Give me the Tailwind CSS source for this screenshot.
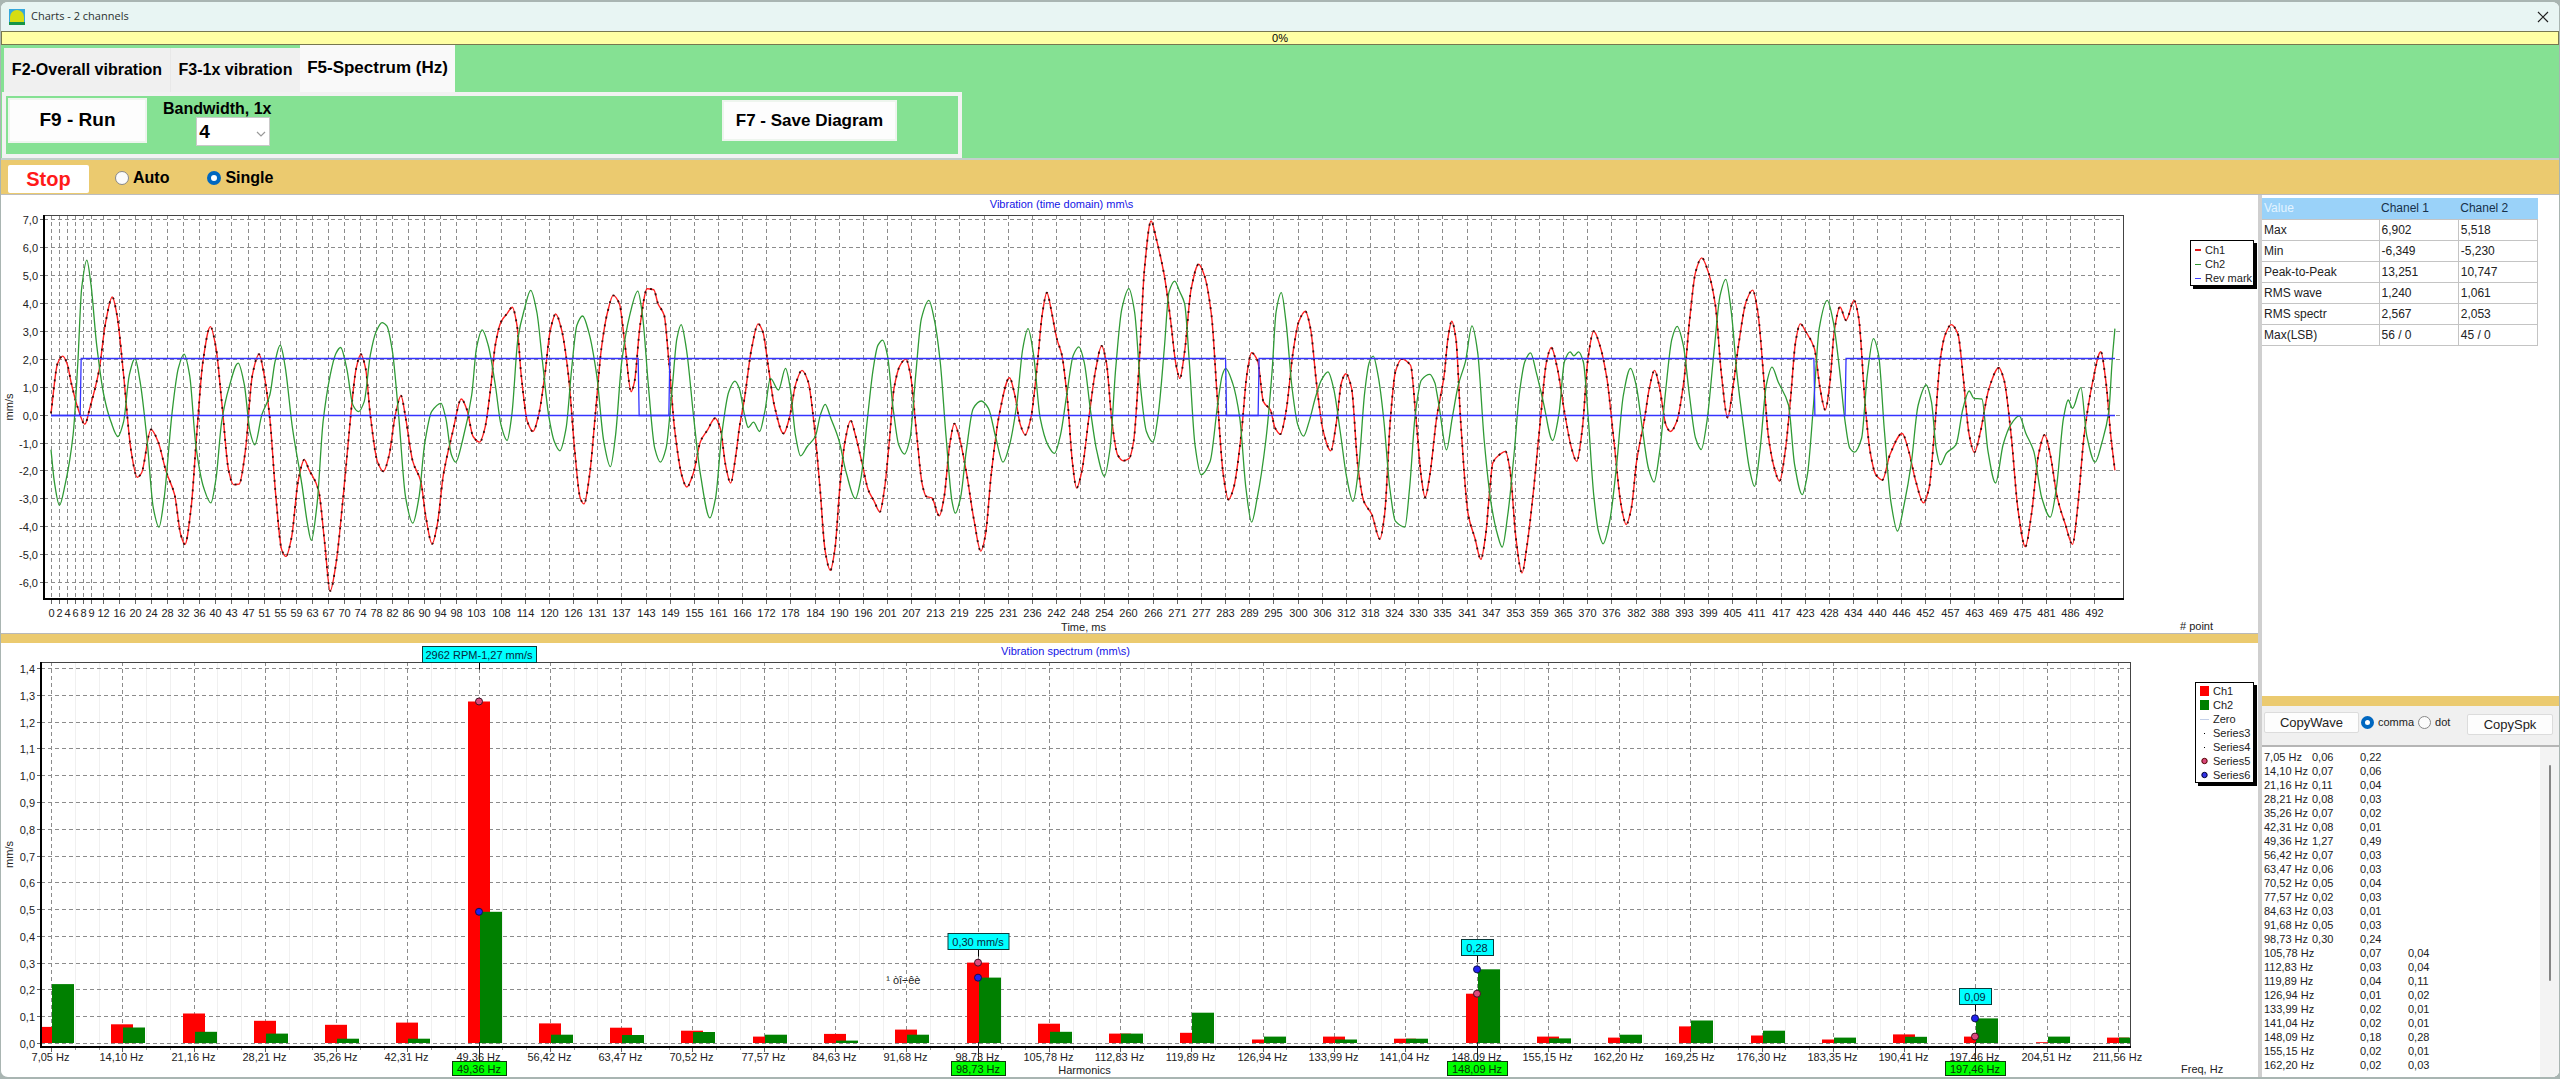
<!DOCTYPE html>
<html lang="en">
<head>
<meta charset="utf-8">
<title>Charts - 2 channels</title>
<script src="https://cdn.jsdelivr.net/npm/@tailwindcss/browser@4"></script>
</head>
<body class="bg-[#a9b5b2] font-['Liberation_Sans',Arial,sans-serif] text-[11px] text-[#222]">
<div class="flex h-screen min-h-[760px] flex-col overflow-hidden rounded-lg border-x border-y-2 border-[#a9b5b2] bg-white">

  <header class="flex h-[29px] shrink-0 items-center gap-1.5 bg-[#e8f5f3] pl-2 pr-2.5">
    <svg class="size-4" viewBox="0 0 16 16" aria-hidden="true">
      <rect width="16" height="16" fill="#35a8dc"/>
      <path d="M1 13V8a7 7 0 0 1 14 0v5z" fill="#d6dd12"/>
      <rect y="13" width="16" height="3" fill="#169447"/>
    </svg>
    <h1 class="grow font-['Open_Sans','Noto_Sans',sans-serif] text-[11px] text-[#2b3130]">Charts - 2 channels</h1>
    <button type="button" aria-label="Close" class="size-3">
      <svg viewBox="0 0 12 12" class="size-3" fill="none" stroke="#222" stroke-width="1.2"><path d="M1 1l10 10M11 1L1 11"/></svg>
    </button>
  </header>

  <div role="progressbar" aria-valuenow="0" aria-valuemin="0" aria-valuemax="100" class="flex h-3.5 shrink-0 items-center justify-center border border-[#77774f] bg-[#ffffa4] text-black">0%</div>

  <section class="flex shrink-0 flex-col items-start bg-[#85e193] pl-px">
    <nav role="tablist" class="flex h-[47px] items-end pl-0.5 text-base font-bold text-black">
      <button role="tab" type="button" class="h-11 w-[167px] border-r border-[#e8e8e8] bg-[#f0f0f0]">F2-Overall vibration</button>
      <button role="tab" type="button" class="h-11 w-[129px] bg-[#f0f0f0]">F3-1x vibration</button>
      <button role="tab" type="button" aria-selected="true" class="h-[47px] w-[155px] bg-[#f9f9f9] pb-0.5 text-[17px]">F5-Spectrum (Hz)</button>
    </nav>
    <div role="tabpanel" class="flex h-[66px] w-[960px] max-w-full items-start border-x-4 border-b-4 border-t-4 border-[#f2f2f2] pl-0.5 font-bold text-black">
      <button type="button" class="mt-0.5 h-[45px] w-[139px] shrink-0 border-2 border-[#eef5ee] bg-[#fdfdfd] text-[19px]">F9 - Run</button>
      <div class="ml-4 flex flex-col items-center">
        <label for="bandwidth" class="mt-1 h-[17px] text-base leading-[17px]">Bandwidth, 1x</label>
        <div class="relative ml-8">
          <select id="bandwidth" class="block h-[29px] w-[74px] appearance-none border border-[#c9c9c9] bg-white pl-0.5 text-[19px] leading-none"><option>4</option><option>8</option></select>
          <svg class="pointer-events-none absolute right-1 top-3 size-2.5" viewBox="0 0 10 10" fill="none" stroke="#999" stroke-width="1.2"><path d="M1 3l4 4 4-4"/></svg>
        </div>
      </div>
      <button type="button" class="ml-auto mr-[61px] mt-1 h-[41px] w-[175px] shrink-0 border-2 border-[#eef5ee] bg-[#fdfdfd] text-[17px]">F7 - Save Diagram</button>
    </div>
  </section>

  <section class="flex h-[37px] shrink-0 items-center border-b border-t-2 border-b-[#bdbdbd] border-t-[#c3cfcb] bg-[#ebca6f] pl-[7px] text-base font-bold text-black">
    <button type="button" class="mt-1 h-7 w-[81px] rounded-xs bg-white text-xl font-bold text-[#ff1a1a]">Stop</button>
    <label class="ml-[26px] flex items-center gap-1 pt-0.5"><input type="radio" name="mode" class="size-3.5 appearance-none rounded-full border border-[#888] bg-[#fbfbfb] checked:border-4 checked:border-[#0067c0]">Auto</label>
    <label class="ml-[38px] flex items-center gap-1 pt-0.5"><input type="radio" name="mode" checked class="size-3.5 appearance-none rounded-full border border-[#888] bg-white checked:border-4 checked:border-[#0067c0]">Single</label>
  </section>

  <main class="flex min-h-0 grow">
    <div class="flex min-w-0 grow flex-col">
      <section class="relative min-h-0 flex-[438] basis-0">
        <svg id="wave" class="absolute inset-0 size-full" role="img" aria-label="Vibration, time domain"></svg>
        <ul class="absolute right-1 top-[45px] w-16 border border-black bg-white pl-1 pt-0.5 leading-[14px] shadow-[3px_3px_0_#000]">
          <li class="flex items-center gap-1"><span class="h-0.5 w-1.5 bg-[#e01818]"></span>Ch1</li>
          <li class="flex items-center gap-1"><span class="h-px w-1.5 bg-[#2e962e]"></span>Ch2</li>
          <li class="flex items-center gap-1 whitespace-nowrap"><span class="h-px w-1.5 shrink-0 bg-[#3c3cff]"></span>Rev mark</li>
        </ul>
      </section>
      <div class="h-[10px] shrink-0 border-t border-[#b9b9b9] bg-[#ebca6f]"></div>
      <section class="relative min-h-0 flex-[434] basis-0">
        <svg id="spectrum" class="absolute inset-0 size-full" role="img" aria-label="Vibration spectrum"></svg>
        <ul class="absolute right-1 top-[39px] w-[59px] border border-black bg-white pl-1 pt-px leading-[14px] shadow-[3px_3px_0_#000]">
          <li class="flex items-center gap-1"><span class="h-2.5 w-[9px] bg-[#ff0000]"></span>Ch1</li>
          <li class="flex items-center gap-1"><span class="h-2.5 w-[9px] bg-[#008000]"></span>Ch2</li>
          <li class="flex items-center gap-1"><span class="h-px w-[9px] bg-[#c3cfe8]"></span>Zero</li>
          <li class="flex items-center gap-1"><span class="mx-1 size-px bg-black"></span>Series3</li>
          <li class="flex items-center gap-1"><span class="mx-1 size-px bg-black"></span>Series4</li>
          <li class="flex items-center gap-1"><svg class="h-2 w-[9px]" viewBox="0 0 9 8"><circle cx="4.5" cy="4" r="2.7" fill="#d9477a" stroke="#500"/></svg>Series5</li>
          <li class="flex items-center gap-1"><svg class="h-2 w-[9px]" viewBox="0 0 9 8"><circle cx="4.5" cy="4" r="2.7" fill="#3333e6" stroke="#003"/></svg>Series6</li>
        </ul>
      </section>
    </div>

    <aside class="flex w-[301px] shrink-0 flex-col border-l-4 border-[#cfcfcf] bg-white">
      <div class="min-h-0 grow pt-[3px]">
        <table class="w-[276px] table-fixed border-collapse text-xs leading-5">
          <thead><tr class="h-[21px] bg-[#9ad2f9] text-left text-[#173049]"><th class="w-[117px] border-b border-[#c4c4c4] pl-0.5 font-normal text-[#e4f4ff]">Value</th><th class="border-b border-[#c4c4c4] pl-0.5 font-normal">Chanel 1</th><th class="border-b border-[#c4c4c4] pl-0.5 font-normal">Chanel 2</th></tr></thead>
          <tbody id="stats"></tbody>
        </table>
      </div>
      <div class="h-[10px] shrink-0 bg-[#ebca6f]"></div>
      <div class="flex h-[41px] shrink-0 items-start border-b-2 border-[#b5b5b5] bg-[#f0f0f0] pl-0.5 pt-1.5">
        <button type="button" class="h-[21px] w-[95px] rounded-xs border border-[#dcdcdc] bg-[#fdfdfd] text-[13px]">CopyWave</button>
        <label class="ml-0.5 flex h-[21px] items-center gap-1"><input type="radio" name="sep" checked class="size-[13px] appearance-none rounded-full border border-[#888] bg-white checked:border-4 checked:border-[#0067c0]">comma</label>
        <label class="ml-1 flex h-[21px] items-center gap-1"><input type="radio" name="sep" class="size-[13px] appearance-none rounded-full border border-[#888] bg-[#fbfbfb] checked:border-4 checked:border-[#0067c0]">dot</label>
        <button type="button" class="ml-auto mr-1.5 mt-0.5 h-[21px] w-[86px] rounded-xs border border-[#dcdcdc] bg-[#fdfdfd] text-[13px]">CopySpk</button>
      </div>
      <div class="flex h-[330px] shrink-0 bg-[#f3f3f3]">
        <textarea id="values" readonly aria-label="Spectrum values" class="grow resize-none overflow-hidden whitespace-pre bg-white pl-0.5 pt-[3px] text-[11px] leading-[14px] outline-none [tab-size:48px]"></textarea>
        <div class="flex w-[19px] justify-center pt-[18px]"><div class="h-[216px] w-0.5 rounded-full bg-[#858585]"></div></div>
      </div>
    </aside>
  </main>
</div>

<script>
const stats = [['Max','6,902','5,518'],['Min','-6,349','-5,230'],['Peak-to-Peak','13,251','10,747'],['RMS wave','1,240','1,061'],['RMS spectr','2,567','2,053'],['Max(LSB)','56 / 0','45 / 0']];
document.getElementById('stats').innerHTML = stats.map(r =>
  `<tr class="h-[21px]">${r.map(c => `<td class="border-b border-r border-[#c4c4c4] pl-0.5">${c}</td>`).join('')}</tr>`).join('');

const listing = ['7,05 Hz|0,06|0,22','14,10 Hz|0,07|0,06','21,16 Hz|0,11|0,04','28,21 Hz|0,08|0,03','35,26 Hz|0,07|0,02','42,31 Hz|0,08|0,01','49,36 Hz|1,27|0,49','56,42 Hz|0,07|0,03','63,47 Hz|0,06|0,03','70,52 Hz|0,05|0,04','77,57 Hz|0,02|0,03','84,63 Hz|0,03|0,01','91,68 Hz|0,05|0,03','98,73 Hz|0,30|0,24','105,78 Hz|0,07|0,04','112,83 Hz|0,03|0,04','119,89 Hz|0,04|0,11','126,94 Hz|0,01|0,02','133,99 Hz|0,02|0,01','141,04 Hz|0,02|0,01','148,09 Hz|0,18|0,28','155,15 Hz|0,02|0,01','162,20 Hz|0,02|0,03'];
document.getElementById('values').value = listing.join('\n').replaceAll('|', '\t');

/* ---- tiny SVG helpers ---- */
const line = (x1,y1,x2,y2,cls) => `<path d="M${x1} ${y1}L${x2} ${y2}" fill="none" class="${cls}"/>`;
const text = (x,y,s,anchor='middle',cls='fill-[#222]') => `<text x="${x}" y="${y}" text-anchor="${anchor}" class="${cls}">${s}</text>`;
const GRID = 'stroke-[#8c8c8c] [stroke-dasharray:4_3]';
const fmt = (v,d) => v.toFixed(d).replace('.', ',');
const half = v => Math.round(v) + .5;

const frames1 = [
[108,675,122,525,133,503,142,525,152,590,163,650,180,708,190,662,210,545,224,400,238,325,248,380,262,560,278,790,291,868,300,855,320,724,335,760,352,850,370,920,383,1040,392,1070,405,960,418,720,430,520,446,414,458,480,470,640,485,850,495,890,507,888,520,790,535,560,549,497,560,560,572,690,585,930,597,1085,606,1106,618,1050,632,880,645,815,655,845,675,905,688,1060,700,1210,712,1130,728,920,745,660,755,540,765,497,775,540,785,680,800,820,813,850,825,800,838,680,850,622,860,690,875,820,892,880,903,990,916,1068,927,1010,940,860,960,730,978,632,990,665,1003,745,1017,762,1028,720,1040,600,1050,470,1062,400,1075,375,1086,356,1096,410,1105,560,1118,700,1130,730,1142,680,1155,560,1166,430,1178,376,1190,420,1205,560,1218,780,1230,930,1238,948,1250,860,1262,680,1275,480,1288,370,1300,320,1313,345,1325,470,1338,610,1345,580,1357,410,1372,300,1386,303,1395,345,1408,380,1418,520,1430,720,1445,860,1456,897,1470,855,1485,760,1500,725,1516,690,1527,720,1538,830,1549,885,1560,800],
[84,720,95,630,110,480,124,406,134,430,145,530,158,650,178,736,190,690,204,585,217,546,230,580,242,700,255,900,266,1090,277,1148,287,1080,297,900,308,760,320,697,330,740,345,830,357,905,370,940,382,972,392,900,402,760,412,600,425,530,437,512,447,560,460,740,472,890,480,925,492,930,508,984,518,930,530,770,540,706,550,745,565,850,582,1000,596,1090,606,1040,618,860,635,680,657,568,668,620,680,710,690,740,702,690,715,540,726,380,736,312,746,370,757,450,768,500,780,640,790,820,799,900,810,850,825,690,840,540,852,472,862,520,874,700,886,800,898,818,910,812,920,760,932,520,943,240,957,96,968,150,985,260,998,390,1010,530,1018,570,1028,490,1042,300,1058,226,1070,260,1085,380,1097,620,1110,860,1121,935,1132,900,1148,740,1160,560,1170,493,1183,518,1195,640,1210,665,1220,720,1231,738,1243,670,1258,490,1270,400,1284,368,1295,420,1308,590,1322,730,1338,788,1350,700,1361,580,1370,556,1382,600,1395,830,1408,940,1425,980,1442,1054,1452,980,1464,700,1475,550,1488,512,1507,530,1518,680,1530,870,1538,928,1548,860],
[79,690,95,560,103,450,111,398,120,450,130,700,146,980,160,1050,173,1115,183,1040,192,900,198,825,212,800,225,790,235,850,247,1050,260,1156,270,1080,285,900,300,680,312,520,322,477,335,540,350,670,365,780,376,820,388,720,400,510,412,428,425,470,440,570,455,760,470,950,481,1010,492,960,503,820,520,690,530,600,541,546,552,600,565,710,575,730,588,700,603,580,615,400,628,250,641,207,655,250,670,350,683,560,696,688,707,600,720,460,735,340,749,304,760,370,772,560,782,740,795,840,806,880,818,790,830,620,840,460,850,406,862,430,880,480,892,600,903,665,913,580,922,430,934,355,947,395,964,335,974,390,987,640,998,790,1010,860,1024,876,1040,800,1066,736,1080,790,1095,880,1111,945,1123,900,1135,720,1147,510,1158,435,1170,408,1184,435,1195,560,1208,740,1219,793,1232,730,1250,600,1271,538,1282,575,1297,740,1312,970,1327,1077,1340,980,1355,800,1368,740,1380,800,1395,930,1412,1010,1427,1070,1438,960,1452,740,1470,580,1487,490,1498,580,1508,740,1517,847]];
const frames2 = [
[108,785,115,880,126,952,138,890,155,740,165,520,173,300,184,214,193,290,205,470,220,620,235,700,250,745,262,700,274,560,286,510,297,580,312,760,325,960,337,1018,348,930,365,670,378,540,390,497,402,560,415,770,432,900,447,945,458,870,470,700,485,600,505,524,518,590,530,730,540,770,555,680,572,620,583,520,594,470,604,530,620,720,640,890,652,1010,660,1058,672,950,685,700,700,560,712,495,722,477,735,540,748,650,760,670,772,640,785,500,797,430,810,402,820,412,832,490,845,680,860,930,875,1006,888,930,900,770,915,670,935,645,945,690,957,800,966,822,980,760,1000,620,1010,480,1022,424,1035,470,1050,590,1062,710,1075,757,1085,680,1098,450,1112,360,1125,305,1138,370,1150,520,1163,680,1175,760,1187,788,1200,720,1212,540,1223,410,1235,382,1248,430,1265,560,1280,760,1294,836,1305,740,1318,520,1335,380,1352,307,1362,380,1375,600,1388,780,1400,822,1412,780,1425,600,1435,450,1444,408,1455,480,1470,680,1485,860,1505,990,1517,930,1530,740,1545,610,1558,578],
[84,600,95,680,103,718,114,702,127,730,138,670,150,570,167,605,182,540,192,600,203,740,214,803,228,775,245,745,256,680,266,648,278,690,295,755,310,850,330,932,342,870,355,700,368,540,378,470,388,455,398,500,410,660,422,770,434,798,446,750,458,560,470,390,486,335,497,390,510,520,522,740,535,940,542,976,553,930,565,790,580,660,597,638,612,660,628,750,643,822,657,770,672,650,685,480,696,420,708,500,722,690,738,770,752,796,765,740,778,620,792,500,804,475,815,520,828,660,842,790,858,865,870,780,882,540,895,360,910,300,922,370,935,600,947,730,961,762,972,680,985,480,995,310,1007,277,1018,310,1028,345,1038,520,1050,770,1063,860,1082,820,1098,650,1108,560,1115,540,1130,585,1145,690,1158,900,1170,1003,1182,930,1200,760,1213,560,1222,370,1233,312,1243,400,1256,600,1268,710,1280,744,1292,700,1305,630,1318,575,1332,550,1344,600,1358,730,1372,870,1385,940,1397,840,1410,610,1420,520,1428,503,1438,560,1450,690,1463,900,1475,1000,1495,1018,1505,900,1517,680,1530,575,1548,558,1559,585],
[79,610,85,660,100,785,112,690,125,590,140,520,154,412,166,490,180,760,195,950,208,1040,218,1078,230,980,243,800,255,610,266,520,278,493,290,550,305,640,325,757,338,680,350,520,362,490,370,502,380,490,390,520,400,680,412,920,422,1030,432,1068,446,1000,460,840,475,620,490,540,502,590,515,720,528,840,540,882,552,790,565,600,578,450,589,413,602,470,615,620,628,750,640,784,652,700,667,490,680,320,692,272,703,360,716,560,730,720,742,840,753,895,765,780,778,590,790,536,803,580,825,650,838,830,854,920,865,860,878,650,890,420,907,335,920,400,933,540,945,700,955,780,965,792,980,750,992,560,1005,450,1016,500,1028,720,1042,940,1056,1030,1070,950,1085,830,1100,650,1117,590,1128,640,1138,780,1147,830,1160,795,1180,770,1195,660,1208,608,1218,630,1235,632,1248,790,1264,885,1280,770,1296,710,1314,683,1328,735,1345,790,1362,930,1380,988,1393,900,1408,690,1418,635,1427,660,1445,598,1457,740,1475,822,1490,760,1504,670,1511,520,1517,420]];
const SCALE = 2.119, ZERO = 679, COUNTS = 84.15, LAST = 2065;
const toSample = (x, f) => x / SCALE + f * 700 - 51;
function decode(frames) {
  const out = [];
  frames.forEach((a, f) => { for (let i = 0; i < a.length; i += 2) out.push([toSample(a[i], f), (ZERO - a[i+1]) / COUNTS]); });
  return out;
}
/* monotone cubic through the turning points */
function smooth(p) {
  const n = p.length, m = [];
  const sl = i => (p[i+1][1]-p[i][1])/(p[i+1][0]-p[i][0]);
  for (let i = 0; i < n; i++) {
    if (i === 0) m.push(sl(0)); else if (i === n-1) m.push(sl(n-2));
    else { const a = sl(i-1), b = sl(i); m.push(a*b <= 0 ? 0 : 2*a*b/(a+b)); }
  }
  let d = `M${p[0][0].toFixed(1)} ${p[0][1].toFixed(1)}`;
  for (let i = 0; i < n-1; i++) {
    const h = (p[i+1][0]-p[i][0])/3;
    d += `C${(p[i][0]+h).toFixed(1)} ${(p[i][1]+m[i]*h).toFixed(1)} ${(p[i+1][0]-h).toFixed(1)} ${(p[i+1][1]-m[i+1]*h).toFixed(1)} ${p[i+1][0].toFixed(1)} ${p[i+1][1].toFixed(1)}`;
  }
  return d;
}
const ch1 = decode(frames1), ch2 = decode(frames2);
const early = [[0,0],[2,8],[4,16],[6,24],[8,32],[9,40],[12,52],[16,68],[20,84],[24,100],[28,116],[32,132],[36,148],[40,164],[43,180],[47,197],[51,213],[55,229],[59,245],[63,261],[67,277],[70,293],[74,309],[78,325],[82,341],[86,357],[90,373],[94,389],[98,405]];
const late = [103,108,114,120,126,131,137,143,149,155,161,166,172,178,184,190,196,201,207,213,219,225,231,236,242,248,254,260,266,271,277,283,289,295,300,306,312,318,324,330,335,341,347,353,359,365,370,376,382,388,393,399,405,411,417,423,428,434,440,446,452,457,463,469,475,481,486,492];

function drawWave() {
  const svg = document.getElementById('wave'), W = svg.clientWidth, H = svg.clientHeight;
  const L = 43, R = W - 135, T = 20, B = H - 34;
  if (R - L < 200 || B - T < 50) return;
  const X = s => L + 7 + s * (R - L - 15) / LAST, Y = v => T + 4 + (7 - v) * (B - T - 4) / 13.6;
  let s = '';
  for (let v = -6; v <= 7; v++) { const y = half(Y(v)); s += line(L,y,R,y,GRID) + line(L-4,y,L,y,'stroke-[#666]') + text(L-6,y+4,fmt(v,1),'end'); }
  const ticks = early.concat(late.map((t,i) => [t, 425.7 + i * 24.16]));
  for (const [t, p] of ticks) { const x = half(X(p)); s += line(x,T,x,B,GRID) + line(x,B,x,B+5,'stroke-[#666]') + text(x,B+18,t); }
  s += line(L,T+.5,R,T+.5,'stroke-[#444]') + line(R+.5,T,R+.5,B+1,'stroke-[#444]') + line(L,T,L,B+1,'stroke-black stroke-2') + line(L-1,B,R+1,B,'stroke-black stroke-2');
  const rev = [[172,0,1],[1355,0,0],[1420,0,1],[1117,1,0],[1186,1,1],[881,2,0],[947,2,1]];
  let d = `M${X(0)} ${half(Y(0))}`, lvl = 0;
  for (const [x,f,up] of rev) { const px = X(toSample(x,f)); d += `L${px-1} ${half(Y(lvl))}L${px} ${half(Y(up ? 2.03 : 0))}`; lvl = up ? 2.03 : 0; }
  d += `L${X(LAST)} ${half(Y(lvl))}`;
  const p1 = smooth(ch1.map(([a,b]) => [X(a),Y(b)])), p2 = smooth(ch2.map(([a,b]) => [X(a),Y(b)]));
  s += `<path d="${p1}" class="fill-none stroke-[#ff2020] [stroke-width:1.4]"/><path d="${p1}" class="fill-none stroke-[#3a0a0a] [stroke-width:1.8] [stroke-dasharray:2_6]"/>`;
  s += `<path d="${p2}" class="fill-none stroke-[#2f9a35] [stroke-width:1.3]"/>`;
  s += `<path d="${d}" class="fill-none stroke-[#3434ff] [stroke-width:1.3]"/>` + line(X(0),half(Y(0)),X(LAST),half(Y(0)),'stroke-[#3434ff] [stroke-width:1.3]');
  const mid = (L + R) / 2;
  s += text(mid-22,13,'Vibration (time domain) mm\\s','middle','fill-[#1414e6]') + text(mid,H-2,'Time, ms') + text(W-78,H-3,'# point','start');
  s += `<text transform="translate(12 ${(T+B)/2}) rotate(-90)" text-anchor="middle" class="fill-[#222]">mm/s</text>`;
  svg.innerHTML = s;
}

/* ---- spectrum ---- */
const hz = ['7,05','14,10','21,16','28,21','35,26','42,31','49,36','56,42','63,47','70,52','77,57','84,63','91,68','98,73','105,78','112,83','119,89','126,94','133,99','141,04','148,09','155,15','162,20','169,25','176,30','183,35','190,41','197,46','204,51','211,56'];
const red = [.06,.07,.11,.083,.068,.076,1.275,.073,.057,.046,.024,.034,.05,.30,.072,.035,.038,.013,.024,.016,.184,.024,.02,.062,.028,.013,.032,.024,.003,.02];
const green = [.22,.058,.042,.035,.016,.016,.49,.031,.03,.041,.031,.009,.031,.244,.042,.035,.113,.024,.013,.016,.275,.017,.031,.084,.046,.02,.023,.092,.024,.02];
const marks = [[6,'2962 RPM-1,27 mm/s',114],[13,'0,30 mm/s',61],[20,'0,28',32],[27,'0,09',32]];

function drawSpectrum() {
  const svg = document.getElementById('spectrum'), W = svg.clientWidth, H = svg.clientHeight;
  const L = 40, R = W - 128, T = 19, B = H - 30;
  if (R - L < 200 || B - T < 50) return;
  const pitch = (R - L - 22) / 29, X = i => L + 10 + i * pitch, Y0 = B - 4, U = (Y0 - T - 6) / 1.4, Y = v => Y0 - v * U;
  let s = `<clipPath id="plot"><path d="M${L} ${T}H${R}V${B}H${L}z"/></clipPath>`;
  for (let i = 0; i < 29; i++) for (const k of [1,2]) { const x = half(X(i + k/3)); s += line(x,T,x,B,'stroke-[#f0f0f0]') + line(x,B,x,B+3,'stroke-[#999]'); }
  for (let k = 0; k <= 14; k++) { const y = half(Y(k/10)); s += line(L,y,R,y,GRID) + line(L-4,y,L,y,'stroke-[#666]') + text(L-6,y+4,fmt(k/10,1),'end'); }
  hz.forEach((h,i) => { const x = half(X(i)); s += line(x,T,x,B,GRID) + line(x,B,x,B+5,'stroke-[#666]') + text(x-1,B+14,h+' Hz'); });
  s += line(L,T+.5,R,T+.5,'stroke-[#444]') + line(R+.5,T,R+.5,B+1,'stroke-[#444]');
  const bar = (x,v,w,c) => `<rect x="${Math.round(x)}" y="${Y(v).toFixed(1)}" width="${w}" height="${(v*U).toFixed(1)}" class="${c}"/>`;
  s += '<g clip-path="url(#plot)">' + red.map((v,i) => bar(X(i)-11,v,22,'fill-[#ff0000]')).join('') + green.map((v,i) => bar(X(i)+1,v,22,'fill-[#008000]')).join('') + '</g>';
  s += line(L,T,L,B+1,'stroke-black stroke-2') + line(L-1,B,R+1,B,'stroke-black stroke-2');
  for (const [i,label,w] of marks) {
    const x = Math.round(X(i)), top = Y(Math.max(red[i],green[i]));
    const boxY = (top > 100 ? Math.round(top - 30) : 3) + .5;
    s += line(x+.5,boxY+16,x+.5,boxY+23,'stroke-black') + line(x+.5,B-5,x+.5,B+16,'stroke-[#222]');
    s += `<rect x="${x-w/2+.5}" y="${boxY}" width="${w}" height="16" class="fill-[#00ffff] stroke-[#0a3a3a]"/>` + text(x,boxY+12,label,'middle','fill-[#06283c]');
    s += `<circle cx="${x}" cy="${Y(red[i])}" r="3.5" class="fill-[#dc4a7c] stroke-[#401020]"/><circle cx="${x}" cy="${Y(green[i])}" r="3.5" class="fill-[#2222ee] stroke-[#101050]"/>`;
    const gw = hz[i].length > 5 ? 60 : 54;
    s += `<rect x="${x-gw/2+.5}" y="${B+14.5}" width="${gw}" height="14" class="fill-[#00ff00] stroke-[#0a3a0a]"/>` + text(x,B+26,hz[i]+' Hz','middle','fill-[#063006]');
  }
  const mid = (L + R) / 2;
  s += text(mid-20,12,'Vibration spectrum (mm\\s)','middle','fill-[#1414e6]') + text(mid-1,H-3,'Harmonics') + text(W-77,H-4,'Freq, Hz','start');
  s += text(X(12)-3,Y(.22),'¹ òî÷êè');
  s += `<text transform="translate(12 ${(T+B)/2}) rotate(-90)" text-anchor="middle" class="fill-[#222]">mm/s</text>`;
  svg.innerHTML = s;
}
/* the observer fires on first layout and on every later change of size */
const watch = new ResizeObserver(() => { drawWave(); drawSpectrum(); });
for (const id of ['wave', 'spectrum']) watch.observe(document.getElementById(id).parentElement);
addEventListener('load', () => { drawWave(); drawSpectrum(); });
</script>
</body>
</html>
